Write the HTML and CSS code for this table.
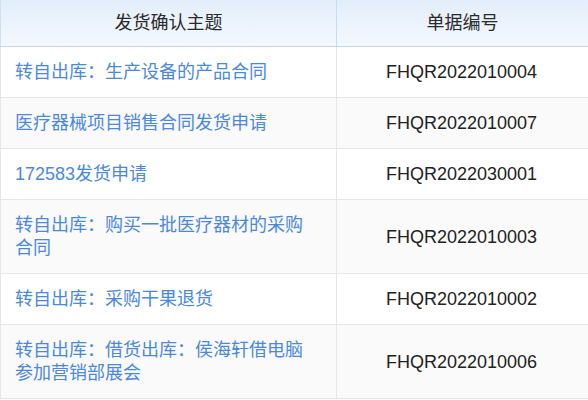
FILE: index.html
```html
<!DOCTYPE html>
<html lang="zh">
<head>
<meta charset="utf-8">
<link rel="stylesheet" href="styles.css">
</head>
<body>
<div class="table">
  <div class="row head">
    <div class="cell c1">发货确认主题</div>
    <div class="cell c2">单据编号</div>
  </div>
  <div class="row">
    <div class="cell c1"><span class="link">转自出库：生产设备的产品合同</span></div>
    <div class="cell c2">FHQR2022010004</div>
  </div>
  <div class="row alt">
    <div class="cell c1"><span class="link">医疗器械项目销售合同发货申请</span></div>
    <div class="cell c2">FHQR2022010007</div>
  </div>
  <div class="row">
    <div class="cell c1"><span class="link">172583发货申请</span></div>
    <div class="cell c2">FHQR2022030001</div>
  </div>
  <div class="row alt">
    <div class="cell c1"><span class="link">转自出库：购买一批医疗器材的采购合同</span></div>
    <div class="cell c2">FHQR2022010003</div>
  </div>
  <div class="row">
    <div class="cell c1"><span class="link">转自出库：采购干果退货</span></div>
    <div class="cell c2">FHQR2022010002</div>
  </div>
  <div class="row alt">
    <div class="cell c1"><span class="link">转自出库：借货出库：侯海轩借电脑参加营销部展会</span></div>
    <div class="cell c2">FHQR2022010006</div>
  </div>
</div>
</body>
</html>
```
FILE: styles.css
```css
html, body {
  margin: 0;
  padding: 0;
  background: #ffffff;
  overflow: hidden;
}
.table {
  width: 588px;
  font-family: "Liberation Sans", "Noto Sans CJK SC", sans-serif;
  font-size: 18px;
  color: #222222;
}
.row {
  display: grid;
  grid-template-columns: 337px 1fr;
  border-bottom: 1px solid #e6e6e6;
  background: #ffffff;
}
.row.alt {
  background: #fafafa;
}
.cell {
  padding: 14px 16px 13px 14px;
  line-height: 23px;
  display: flex;
  align-items: center;
}
.c1 {
  border-left: 1px solid #e6e6e6;
  border-right: 1px solid #e6e6e6;
}
.c2 {
  justify-content: center;
  text-align: center;
}
.link {
  color: #4a88e2;
}
.head {
  background: linear-gradient(to bottom, #e3eefb, #f3f8fe);
  border-bottom: 1px solid #bdd5ee;
}
.head .cell {
  height: 46px;
  padding: 0 15px;
  box-sizing: border-box;
  justify-content: center;
  color: #2a2a2a;
}
.head .c1 {
  border-left-color: #cfe0f2;
  border-right-color: #c7dcf1;
}
```
